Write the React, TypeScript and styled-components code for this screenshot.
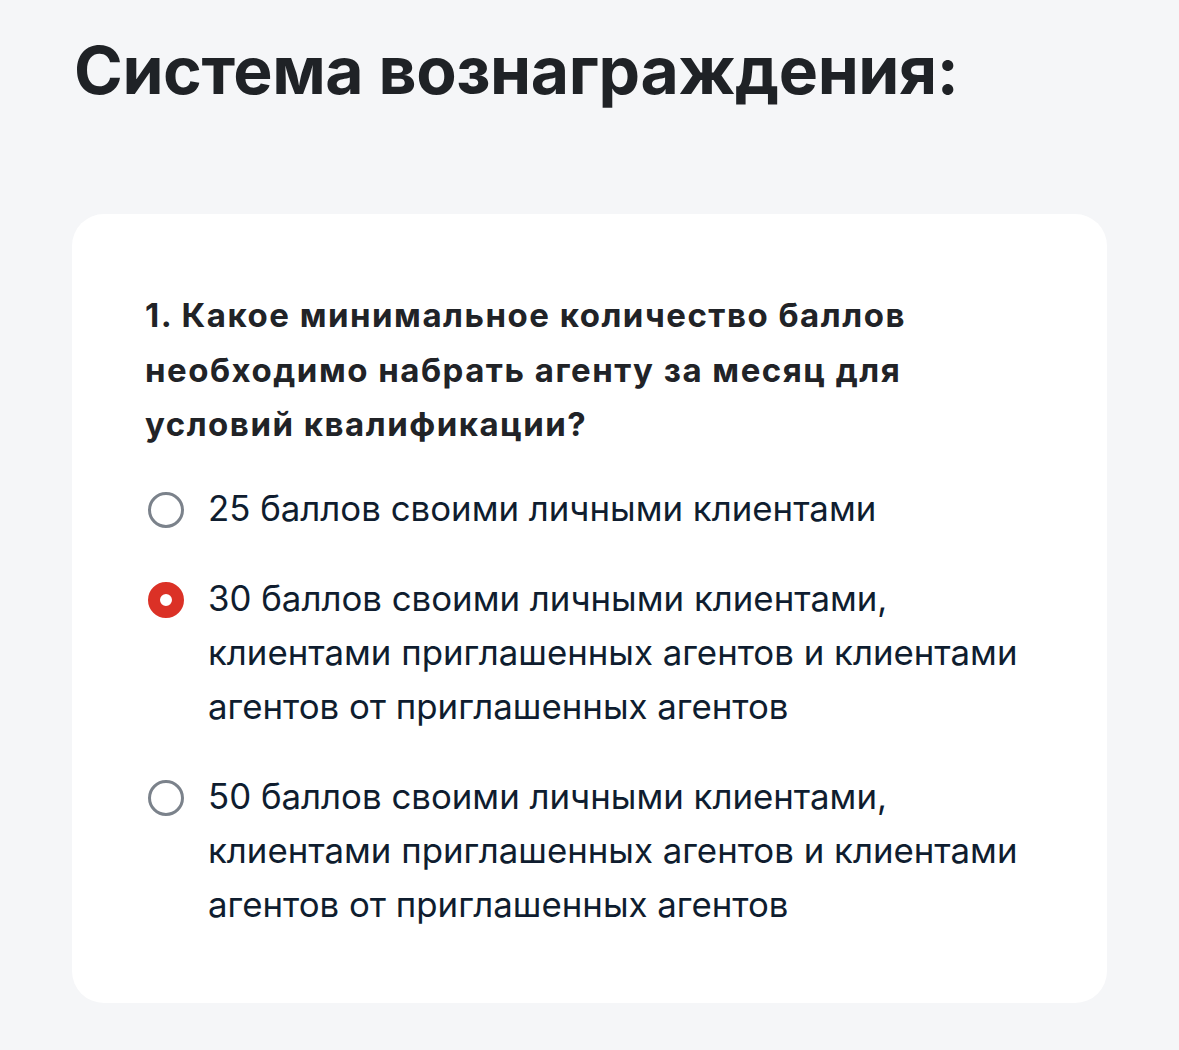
import { createGlobalStyle, styled } from 'styled-components';

const GlobalStyle = createGlobalStyle`
  html, body {
    margin: 0;
    padding: 0;
    background: #f5f6f8;
  }
  body {
    font-family: Inter, "Noto Sans", "Liberation Sans", sans-serif;
  }
`;

const options = [
  { id: 1, text: '25 баллов своими личными клиентами' },
  {
    id: 2,
    text: '30 баллов своими личными клиентами, клиентами приглашенных агентов и клиентами агентов от приглашенных агентов',
  },
  {
    id: 3,
    text: '50 баллов своими личными клиентами, клиентами приглашенных агентов и клиентами агентов от приглашенных агентов',
  },
];

const App = () => {
  const selected = 2;
  return (
    <Page>
      <GlobalStyle />
      <Title>Система вознаграждения:</Title>
      <Card>
        <Question>
          1. Какое минимальное количество баллов необходимо набрать агенту за месяц для условий квалификации?
        </Question>
        <Options>
          {options.map((o) => (
            <Option key={o.id}>
              <Radio $checked={o.id === selected} />
              <OptionText>{o.text}</OptionText>
            </Option>
          ))}
        </Options>
      </Card>
    </Page>
  );
};

const Page = styled.div`
  min-height: 1050px;
  box-sizing: border-box;
  padding: 29px 72px 40px 72px;
`;

const Title = styled.h1`
  margin: 0 0 103px 2px;
  font-size: 66px;
  line-height: 82px;
  font-weight: 700;
  letter-spacing: -0.4px;
  color: #1f2226;
`;

const Card = styled.div`
  width: 1035px;
  box-sizing: border-box;
  background: #ffffff;
  border-radius: 32px;
  padding: 74px 72px 72px 73px;
`;

const Question = styled.div`
  max-width: 800px;
  font-size: 33px;
  line-height: 54.5px;
  font-weight: 700;
  letter-spacing: 1.5px;
  color: #212327;
  margin-bottom: 29px;
`;

const Options = styled.div`
  display: flex;
  flex-direction: column;
  gap: 36px;
`;

const Option = styled.label`
  display: flex;
  align-items: flex-start;
  gap: 24px;
  cursor: pointer;
`;

const Radio = styled.span<{ $checked: boolean }>`
  flex: none;
  box-sizing: border-box;
  width: 36px;
  height: 36px;
  margin-top: 11px;
  margin-left: 3px;
  border-radius: 50%;
  border: ${(p) => (p.$checked ? '12px solid #db3126' : '3px solid #7b828b')};
  background: #ffffff;
`;

const OptionText = styled.span`
  font-size: 34.8px;
  line-height: 54px;
  font-weight: 400;
  color: #0f1d2f;
  max-width: 830px;
`;

export default App;
